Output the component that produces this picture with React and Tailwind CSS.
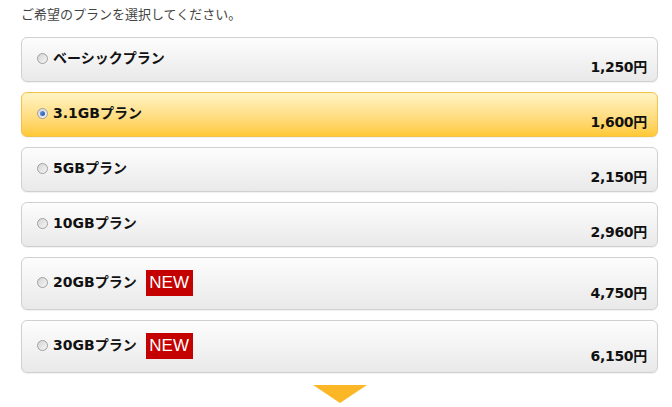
import React from "react";

const plans = [
  { name: "ベーシックプラン", price: "1,250円" },
  { name: "3.1GBプラン", price: "1,600円", selected: true },
  { name: "5GBプラン", price: "2,150円" },
  { name: "10GBプラン", price: "2,960円" },
  { name: "20GBプラン", price: "4,750円", isNew: true },
  { name: "30GBプラン", price: "6,150円", isNew: true },
];

function Radio({ checked }) {
  return (
    <span className="flex h-[11px] w-[11px] shrink-0 items-center justify-center rounded-full border border-[#a0a0a0] bg-gradient-to-br from-[#d4d4d4] to-[#f6f6f6]">
      {checked && (
        <span className="h-[5px] w-[5px] rounded-full bg-gradient-to-br from-[#6b9de0] to-[#1e4fa5]" />
      )}
    </span>
  );
}

export default function App() {
  return (
    <div
      className="w-[672px] h-[407px] bg-white overflow-hidden"
      style={{ fontFamily: '"DejaVu Sans", "Noto Sans CJK JP", sans-serif' }}
    >
      <div className="pl-[21px] pr-[14px]">
        <p className="pt-[6px] text-[13px] leading-[16px] text-[#444] h-[37px]" style={{ fontFamily: '"Noto Sans CJK JP", sans-serif' }}>
          ご希望のプランを選択してください。
        </p>
        <div className="flex flex-col gap-[10px]">
          {plans.map((p) => (
            <div
              key={p.name}
              className={
                "flex flex-col rounded-[6px] border pl-[15px] pr-[10px] pt-[10px] shadow-[0_1px_1px_rgba(0,0,0,0.06)] " +
                (p.isNew ? "pb-[8px] " : "pb-[6px] ") +
                (p.selected
                  ? "border-[#f2c24a] bg-gradient-to-b from-[#fff4c4] to-[#ffc933]"
                  : "border-[#d0d0d0] bg-gradient-to-b from-[#fdfdfd] to-[#e9e9e9]")
              }
            >
              <div className={"flex items-center " + (p.isNew ? "h-[29px]" : "h-[20px]")}>
                <Radio checked={p.selected} />
                <span className="ml-[5px] text-[14px] font-bold text-[#111]">{p.name}</span>
                {p.isNew && (
                  <span
                    className="ml-[9px] flex h-[26px] w-[47px] items-center justify-center bg-[#c40000] text-[17px] text-white"
                    style={{ fontFamily: '"Liberation Sans", Arial, sans-serif' }}
                  >
                    NEW
                  </span>
                )}
              </div>
              <div
                className={
                  "text-right text-[14px] font-bold leading-[16px] text-[#111] tracking-[-0.3px] " +
                  (p.isNew ? "-mt-[12px]" : "-mt-[9px]")
                }
              >
                {p.price}
              </div>
            </div>
          ))}
        </div>
        <div className="mt-[12px] flex justify-center">
          <svg width="54" height="18" viewBox="0 0 54 18">
            <polygon points="0,0 54,0 27,18" fill="#fbb726" />
          </svg>
        </div>
      </div>
    </div>
  );
}
